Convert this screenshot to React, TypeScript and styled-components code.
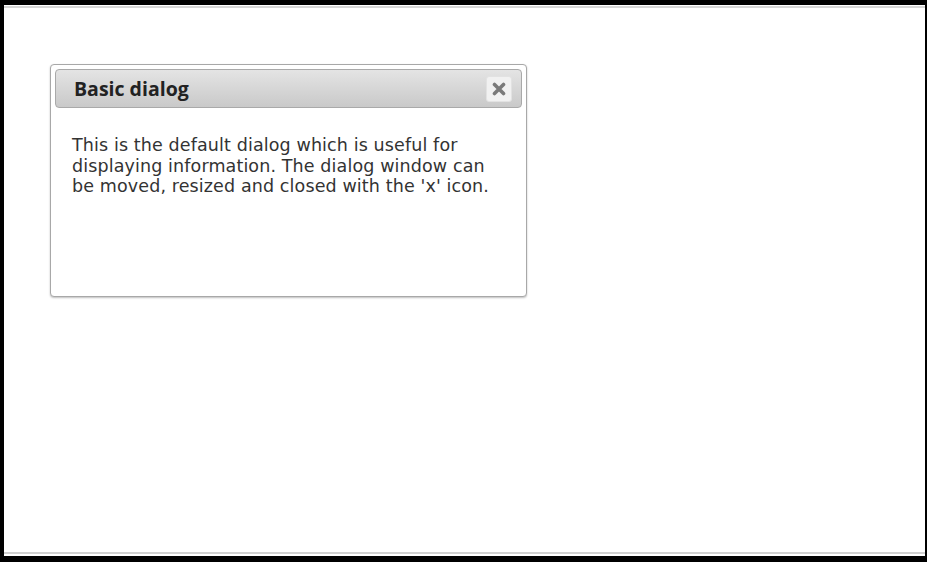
import React from "react";
import styled, { createGlobalStyle } from "styled-components";

const Global = createGlobalStyle`
  html, body { margin: 0; padding: 0; background: #ffffff; }
  #root { width: 927px; height: 562px; }
`;

const Frame = styled.div`
  box-sizing: border-box;
  width: 927px;
  height: 562px;
  background: #ffffff;
  border-style: solid;
  border-color: #000000;
  border-width: 5px 2px 6px 4px;
  display: flex;
  flex-direction: column;
`;

const Page = styled.div`
  flex: 1;
  margin-top: 1px;
  margin-bottom: 2px;
  border-top: 2px solid #d6d6d6;
  border-bottom: 2px solid #d0d0d0;
  padding: 56px 0 0 46px;
`;

const Dialog = styled.div`
  box-sizing: border-box;
  width: 477px;
  height: 233px;
  border: 1px solid #a8a8a8;
  border-radius: 4px;
  padding: 4px;
  background: #ffffff;
  box-shadow: 0 1px 2px rgba(0, 0, 0, 0.25);
  display: flex;
  flex-direction: column;
`;

const TitleBar = styled.div`
  box-sizing: border-box;
  height: 39px;
  flex: none;
  border: 1px solid #a9a9a9;
  border-radius: 4px;
  background: linear-gradient(#e4e4e4, #c9c9c9);
  display: flex;
  align-items: center;
  justify-content: space-between;
  padding: 0 9px 0 18px;
`;

const Title = styled.span`
  font-family: "Open Sans", "DejaVu Sans", sans-serif;
  font-weight: 700;
  font-size: 19.5px;
  color: #222222;
`;

const CloseButton = styled.button`
  box-sizing: border-box;
  width: 26px;
  height: 26px;
  padding: 0;
  border: 1px solid #e2e2e2;
  border-radius: 3px;
  background: #f1f1f1;
  display: flex;
  align-items: center;
  justify-content: center;
  cursor: pointer;
`;

const Content = styled.div`
  padding: 27px 17px 0 17px;
  font-family: "DejaVu Sans", Verdana, sans-serif;
  font-size: 17.5px;
  letter-spacing: 0.12px;
  line-height: 20.5px;
  color: #333333;
`;

export default function App() {
  return (
    <>
      <Global />
      <Frame>
        <Page>
          <Dialog>
            <TitleBar>
              <Title>Basic dialog</Title>
              <CloseButton aria-label="close">
                <svg width="14" height="14" viewBox="0 0 14 14">
                  <path d="M2.5 2.5 L11.5 11.5 M11.5 2.5 L2.5 11.5" stroke="#7a7a7a" strokeWidth="3.6" strokeLinecap="round" />
                </svg>
              </CloseButton>
            </TitleBar>
            <Content>
              This is the default dialog which is useful for
              <br />
              displaying information. The dialog window can
              <br />
              be moved, resized and closed with the 'x' icon.
            </Content>
          </Dialog>
        </Page>
      </Frame>
    </>
  );
}
